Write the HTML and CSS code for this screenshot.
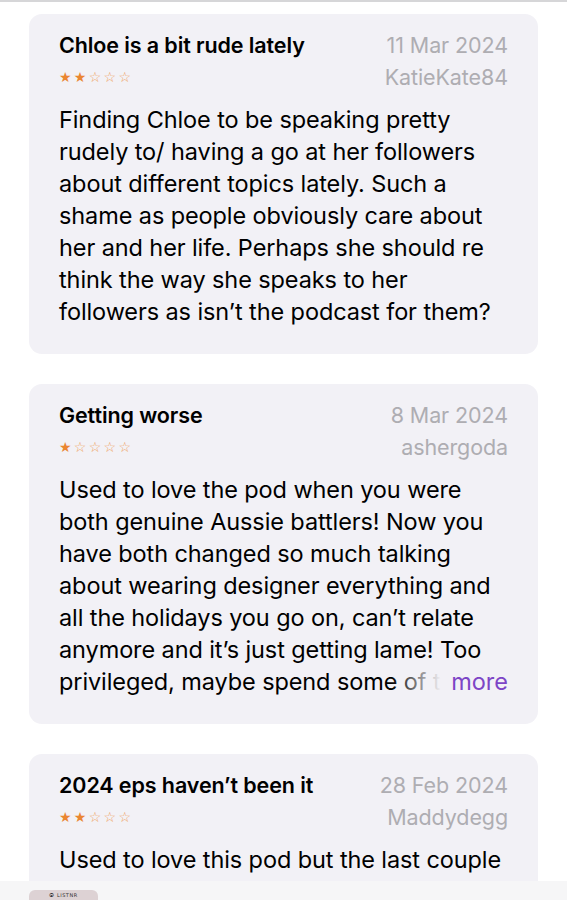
FILE: index.html
```html
<!DOCTYPE html>
<html lang="en">
<head>
    <meta charset="UTF-8">
    <meta name="viewport" content="width=device-width, initial-scale=1.0">
    <title>Ratings &amp; Reviews</title>
    <link rel="stylesheet" href="styles.css">
</head>
<body>
    <div class="topline"></div>

    <div class="reviews">
        <div class="review">
            <div class="review-head">
                <div class="review-title">Chloe is a bit rude lately</div>
                <div class="review-date">11 Mar 2024</div>
            </div>
            <div class="review-meta">
                <div class="stars"><span class="on">★★</span>☆☆☆</div>
                <div class="review-author">KatieKate84</div>
            </div>
            <p class="review-body">Finding Chloe to be speaking pretty<br>
                rudely to/ having a go at her followers<br>
                about different topics lately. Such a<br>
                shame as people obviously care about<br>
                her and her life. Perhaps she should re<br>
                think the way she speaks to her<br>
                followers as isn’t the podcast for them?</p>
        </div>

        <div class="review">
            <div class="review-head">
                <div class="review-title">Getting worse</div>
                <div class="review-date">8 Mar 2024</div>
            </div>
            <div class="review-meta">
                <div class="stars"><span class="on">★</span>☆☆☆☆</div>
                <div class="review-author">ashergoda</div>
            </div>
            <div class="clamp">
                <p class="review-body">Used to love the pod when you were<br>
                    both genuine Aussie battlers! Now you<br>
                    have both changed so much talking<br>
                    about wearing designer everything and<br>
                    all the holidays you go on, can’t relate<br>
                    anymore and it’s just getting lame! Too<br>
                    privileged, maybe spend some of that</p>
                <span class="more">more</span>
            </div>
        </div>

        <div class="review review-last">
            <div class="review-head">
                <div class="review-title">2024 eps haven’t been it</div>
                <div class="review-date">28 Feb 2024</div>
            </div>
            <div class="review-meta">
                <div class="stars"><span class="on">★★</span>☆☆☆</div>
                <div class="review-author">Maddydegg</div>
            </div>
            <p class="review-body">Used to love this pod but the last couple</p>
        </div>
    </div>

    <div class="player">
        <div class="player-art">⦿ LISTNR</div>
    </div>
</body>
</html>
```

FILE: styles.css
```css
html,
body {
    overflow: hidden;
}

body {
    margin: 0;
    background-color: #fff;
    font-family: Inter, 'Noto Sans', sans-serif;
    color: #000;
    height: 900px;
    position: relative;
}

.topline {
    height: 2px;
    background-color: #d6d6d8;
}

.reviews {
    display: flex;
    flex-direction: column;
    gap: 30px;
    padding: 12px 29px 0 29px;
}

.review {
    background-color: #f2f1f6;
    border-radius: 13px;
    padding: 18px 30px 26px 30px;
}

.review-last {
    min-height: 100px;
}

.review-head,
.review-meta {
    display: flex;
    justify-content: space-between;
    align-items: center;
}

.review-head {
    height: 26px;
}

.review-meta {
    height: 30px;
    margin-top: 4px;
}

.review-title {
    font-size: 21.5px;
    font-weight: 600;
    letter-spacing: -0.1px;
}

.review-date,
.review-author {
    font-size: 21.5px;
    color: #aeadb2;
    letter-spacing: -0.1px;
}

.stars {
    font-family: 'DejaVu Sans', sans-serif;
    font-size: 14px;
    letter-spacing: 2.3px;
    color: #efa05a;
}

.stars .on {
    color: #ea8632;
}

.review-body {
    margin: 12px 0 0 0;
    font-size: 23.5px;
    line-height: 32px;
    letter-spacing: -0.1px;
}

.clamp {
    position: relative;
    margin-top: 12px;
    overflow: hidden;
}

.clamp .review-body {
    margin: 0;
}

.more {
    position: absolute;
    right: 0;
    bottom: 0;
    font-size: 23.5px;
    line-height: 32px;
    color: #7d45c6;
    padding-left: 60px;
    background: linear-gradient(to right, rgba(242, 241, 246, 0), #f2f1f6 50px);
}

.player {
    position: absolute;
    left: 0;
    right: 0;
    bottom: 0;
    height: 19px;
    background-color: #f6f6f7;
}

.player-art {
    position: absolute;
    left: 29px;
    top: 9px;
    width: 69px;
    height: 10px;
    border-radius: 6px 6px 0 0;
    background-color: #ddd2d4;
    font-family: 'DejaVu Sans', sans-serif;
    font-size: 5px;
    text-align: center;
    line-height: 10px;
    color: #333;
    letter-spacing: 0.5px;
}
```
